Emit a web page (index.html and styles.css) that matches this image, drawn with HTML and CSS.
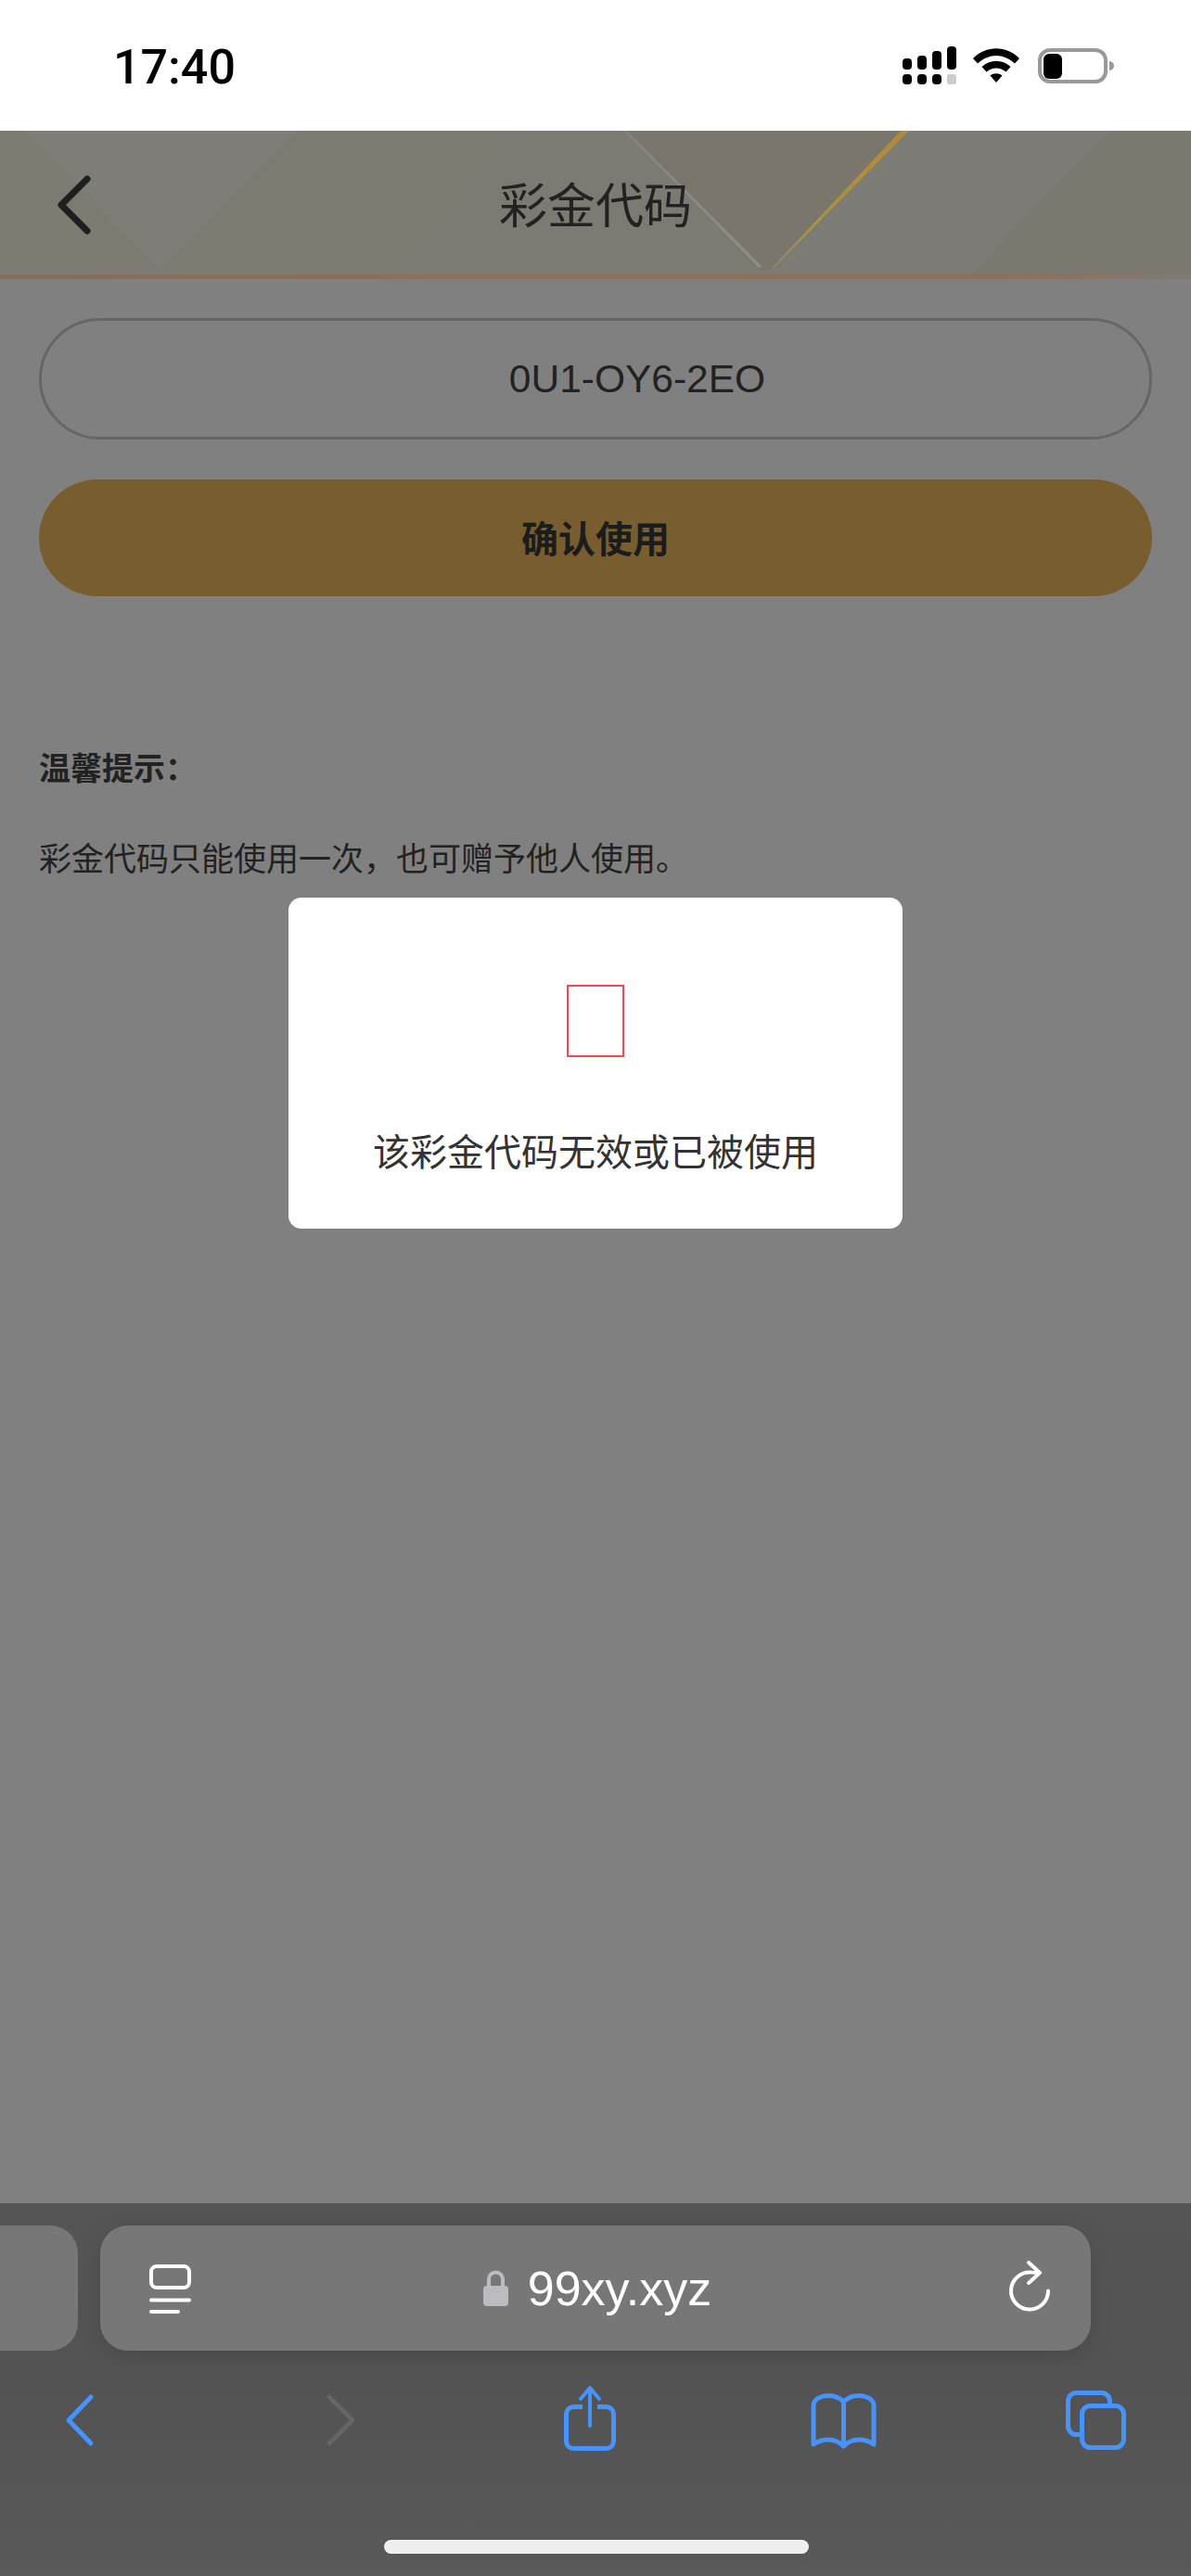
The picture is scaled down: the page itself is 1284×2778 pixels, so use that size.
FILE: index.html
```html
<!DOCTYPE html>
<html lang="zh-CN">
  <head>
    <meta charset="UTF-8" />
    <meta name="viewport" content="width=device-width, initial-scale=1.0" />
    <title>彩金代码</title>
    <link rel="stylesheet" href="styles.css">
  </head>
  <body>
    <div class="status-bar">
      <span class="time">17:40</span>
      <div class="status-icons">
        <svg class="signal" width="58" height="41" viewBox="0 0 58 41">
          <rect x="0" y="13" width="10" height="12" rx="4" />
          <rect x="16" y="10" width="10" height="15" rx="4" />
          <rect x="32" y="5" width="10" height="20" rx="4" />
          <rect x="48" y="0" width="10" height="25" rx="4" />
          <rect x="0" y="30" width="10" height="11" rx="4" />
          <rect x="16" y="30" width="10" height="11" rx="4" />
          <rect x="32" y="30" width="10" height="11" rx="4" />
          <rect x="48" y="30" width="10" height="11" rx="3" fill="#ccc" />
        </svg>
        <svg class="wifi" width="50" height="37" viewBox="0 0 50 37">
          <path d="M0 11C14-3.5 36-3.5 50 11L45 16.5C32.5 5 17.5 5 5 16.5Z" />
          <path d="M9.5 20C18.5 11.5 31.5 11.5 40.5 20L35.5 25.5C29 20 21 20 14.5 25.5Z" />
          <path d="M18.5 29.5C22 26.5 28 26.5 31.5 29.5L25 37Z" />
        </svg>
        <svg class="battery" width="84" height="40" viewBox="0 0 84 40">
          <rect x="3" y="3" width="71" height="34" rx="11" fill="none" stroke="#999" stroke-width="4" />
          <rect x="7" y="7" width="20" height="27" rx="6" />
          <path d="M78 15a5 5 0 0 1 0 10Z" fill="#999" />
        </svg>
      </div>
    </div>

    <div class="main">
      <div class="header">
        <svg class="header-bg" width="1284" height="155" viewBox="0 0 1284 155">
          <defs>
            <linearGradient id="gold" x1="0" y1="0" x2="0" y2="1">
              <stop offset="0" stop-color="#b0893a" />
              <stop offset="0.7" stop-color="#ab9244" />
              <stop offset="1" stop-color="#8f8c70" />
            </linearGradient>
            <linearGradient id="silver" x1="0" y1="0" x2="0" y2="1">
              <stop offset="0" stop-color="#84827c" />
              <stop offset="0.6" stop-color="#8a8a86" />
              <stop offset="1" stop-color="#8e8e7f" />
            </linearGradient>
          </defs>
          <rect width="1284" height="155" fill="#7c7a72" />
          <polygon points="0,0 27,0 173,150 165,155 0,155" fill="#7d7a71" />
          <polygon points="27,0 322,0 173,150" fill="#7e7d78" />
          <polygon points="322,0 553,0 430,155 165,155" fill="#7d7a71" />
          <polygon points="672,0 975,0 830,150 818,150" fill="#7a766c" />
          <polygon points="975,0 1198,0 1045,155 835,155" fill="#7d7b75" />
          <polygon points="1198,0 1284,0 1284,155 1045,155" fill="#7b7870" />
          <polygon points="672,0 676,0 821,146 818,148" fill="url(#silver)" />
          <polygon points="971,0 980,0 836,146 832,148" fill="url(#gold)" />
        </svg>
        <svg class="header-back" width="44" height="70" viewBox="0 0 44 70">
          <path d="M36 7L8 35L36 63" fill="none" stroke="#1f1f20" stroke-width="7" stroke-linecap="round" stroke-linejoin="round" />
        </svg>
        <h1 class="header-title">彩金代码</h1>
      </div>

      <div class="content">
        <div class="code-field">0U1-OY6-2EO</div>
        <div class="confirm-button">确认使用</div>
        <p class="hint hint-title">温馨提示&#xFF1A;</p>
        <p class="hint">彩金代码只能使用一次&#xFF0C;也可赠予他人使用&#x3002;</p>
      </div>

      <div class="modal">
        <div class="missing-icon"></div>
        <p class="modal-text">该彩金代码无效或已被使用</p>
      </div>
    </div>

    <div class="toolbar">
      <div class="url-row">
        <div class="side-tab"></div>
        <div class="url-pill">
          <svg width="50" height="60" viewBox="0 0 50 60" fill="none" stroke="#fff" stroke-width="4" stroke-linecap="round">
            <rect x="4" y="6" width="41" height="23" rx="6" />
            <path d="M4 42.5H45" />
            <path d="M4 55H33" />
          </svg>
          <div class="url">
            <svg width="28" height="40" viewBox="0 0 28 40">
              <rect x="0" y="17" width="27" height="22" rx="4" fill="#bbbbc0" />
              <path d="M6 18V10a7.5 7.5 0 0 1 15 0V18" fill="none" stroke="#bbbbc0" stroke-width="4" />
            </svg>
            <span>99xy.xyz</span>
          </div>
          <svg width="50" height="60" viewBox="0 0 50 60" fill="none" stroke="#fff" stroke-width="4" stroke-linecap="round" stroke-linejoin="round">
            <path d="M45 32.5A20 20 0 1 1 27 12.6L35 13" />
            <path d="M24 2L36 13L24 24" />
          </svg>
        </div>
      </div>

      <div class="nav-row">
        <svg class="nav-back" width="44" height="80" viewBox="0 0 44 80" fill="none" stroke="#4593fb" stroke-width="5" stroke-linecap="round" stroke-linejoin="round">
          <path d="M32 15L8 40L32 65" />
        </svg>
        <svg class="nav-forward" width="45" height="80" viewBox="0 0 45 80" fill="none" stroke="#666" stroke-width="5" stroke-linecap="round" stroke-linejoin="round">
          <path d="M10 15L35 40L10 65" />
        </svg>
        <svg class="nav-share" width="72" height="80" viewBox="0 0 72 80" fill="none" stroke="#4593fb" stroke-width="5" stroke-linecap="round" stroke-linejoin="round">
          <path d="M28 25.5H18.5a8 8 0 0 0-8 8V62.5a8 8 0 0 0 8 8H53.5a8 8 0 0 0 8-8V33.5a8 8 0 0 0-8-8H44" stroke-linecap="butt" />
          <path d="M36 6V46" stroke-width="4" />
          <path d="M26 17L36 5L46 17" stroke-width="4" />
        </svg>
        <svg class="nav-book" width="80" height="80" viewBox="0 0 80 80" fill="none" stroke="#4593fb" stroke-width="5" stroke-linecap="round" stroke-linejoin="round">
          <path d="M39.5 20C35 15.5 29 13.5 23 13.5C16 13.5 7 17 7 24V66C12 62.5 17 61 23 61C29 61 35 63.5 39.5 68C44 63.5 50 61 56 61C62 61 67 62.5 72 66V24C72 17 63 13.5 56 13.5C50 13.5 44 15.5 39.5 20ZM39.5 20V68" />
        </svg>
        <svg class="nav-tabs" width="75" height="80" viewBox="0 0 75 80" fill="none" stroke="#4593fb" stroke-width="5">
          <rect x="21.5" y="24.5" width="45" height="45" rx="9" />
          <path d="M21 55.5H15.5a9 9 0 0 1-9-9V19.5a9 9 0 0 1 9-9H42.5a9 9 0 0 1 9 9V24.5" />
        </svg>
      </div>

      <div class="home-indicator"></div>
    </div>
  </body>
</html>
```

FILE: styles.css
```css
body {
  margin: 0;
  width: 1284px;
  height: 2778px;
  display: flex;
  flex-direction: column;
  overflow: hidden;
  font-family: "Liberation Sans", "Noto Sans CJK SC", sans-serif;
  background-color: #808080;
}

.status-bar {
  height: 141px;
  flex-shrink: 0;
  display: flex;
  align-items: center;
  justify-content: space-between;
  background-color: #fff;
  padding: 0 82px 0 122px;
  box-sizing: border-box;
}
.time {
  font-family: Roboto, sans-serif;
  font-size: 52px;
  font-weight: 500;
  line-height: 60px;
  padding-top: 5px;
  color: #000;
}
.status-icons {
  display: flex;
  align-items: center;
  gap: 18px;
}
.wifi {
  margin-right: 1px;
}

.main {
  flex: 1;
  position: relative;
}

.header {
  position: relative;
  height: 160px;
  display: grid;
  grid-template-columns: 1fr auto 1fr;
  align-items: center;
  background-color: #8d7059;
  background-image: linear-gradient(90deg, #80705f 0, #8d7059 40%, #8d7059 85%, #7f7b75 100%);
}
.header-bg {
  position: absolute;
  top: 0;
  left: 0;
}
.header-back {
  position: relative;
  margin-left: 58px;
}
.header-title {
  position: relative;
  margin: 0 0 6px;
  font-family: "Noto Sans CJK SC", sans-serif;
  font-size: 52px;
  font-weight: 400;
  color: #222;
}

.content {
  padding: 42px 42px 0;
}
.code-field {
  height: 131px;
  box-sizing: border-box;
  border: 3px solid #666;
  border-radius: 66px;
  padding-left: 90px;
  display: flex;
  align-items: center;
  justify-content: center;
  font-size: 42.5px;
  color: #222;
}
.confirm-button {
  height: 126px;
  margin-top: 43px;
  padding-bottom: 3px;
  box-sizing: border-box;
  border-radius: 63px;
  background-color: #785d2e;
  display: flex;
  align-items: center;
  justify-content: center;
  font-family: "Noto Sans CJK SC", sans-serif;
  font-size: 40px;
  font-weight: 700;
  color: #1c1c1c;
}
.hint {
  margin: 47px 0 0;
  font-family: "Noto Sans CJK SC", sans-serif;
  font-size: 35px;
  line-height: 50px;
  color: #222;
}
.hint-title {
  margin-top: 159px;
  font-size: 34px;
  font-weight: 700;
}

.modal {
  position: absolute;
  top: 827px;
  left: 311px;
  width: 662px;
  height: 357px;
  box-sizing: border-box;
  padding-top: 94px;
  background-color: #fff;
  border-radius: 14px;
  display: flex;
  flex-direction: column;
  align-items: center;
}
.missing-icon {
  width: 62px;
  height: 78px;
  box-sizing: border-box;
  border: 2px solid #f6474c;
}
.modal-text {
  margin: 70px 0 0;
  font-family: "Noto Sans CJK SC", sans-serif;
  font-size: 40px;
  line-height: 60px;
  color: #333;
}

.toolbar {
  height: 402px;
  flex-shrink: 0;
  background-image: linear-gradient(180deg, #555 0, #535353 50%, #595959 100%);
  padding-top: 24px;
  box-sizing: border-box;
}
.url-row {
  display: flex;
  gap: 24px;
}
.side-tab {
  width: 84px;
  height: 135px;
  background-color: #777;
  border-radius: 0 30px 30px 0;
}
.url-pill {
  width: 1068px;
  height: 135px;
  box-sizing: border-box;
  padding: 0 41px 0 51px;
  background-color: #777;
  border-radius: 30px;
  box-shadow: 0 6px 24px rgba(0, 0, 0, 0.12);
  display: flex;
  align-items: center;
  justify-content: space-between;
}
.url {
  display: flex;
  align-items: center;
  gap: 20px;
  padding-right: 6px;
  font-size: 52px;
  color: #fff;
}

.nav-row {
  display: flex;
  margin-top: 35px;
  padding-left: 66px;
}
.nav-forward {
  margin-left: 235px;
}
.nav-share {
  margin-left: 210px;
}
.nav-book {
  margin-left: 198px;
}
.nav-tabs {
  margin-left: 195px;
}

.home-indicator {
  width: 458px;
  height: 15px;
  margin: 89px 0 0 414px;
  border-radius: 8px;
  background-color: #eee;
}
```
